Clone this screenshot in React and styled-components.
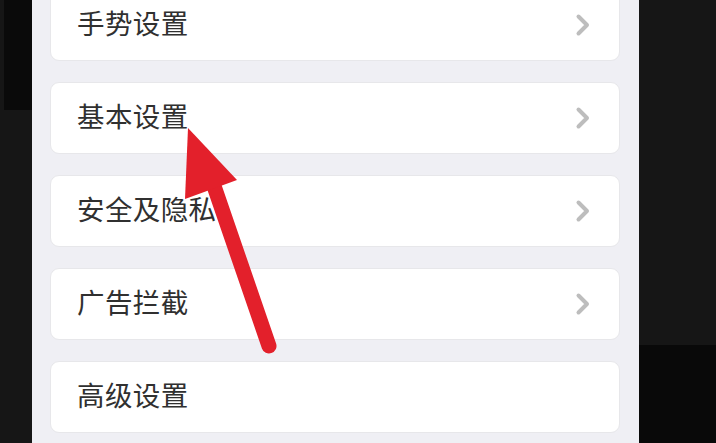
import React from 'react';
import styled, { createGlobalStyle } from 'styled-components';

const GlobalStyle = createGlobalStyle`
  html, body {
    margin: 0;
    padding: 0;
    background: #151515;
    overflow: hidden;
  }
  body {
    font-family: "Noto Sans CJK SC", "Noto Sans", sans-serif;
  }
`;

const Screen = styled.div`
  position: relative;
  width: 716px;
  height: 443px;
  display: flex;
  overflow: hidden;
`;

const SideStrip = styled.div`
  width: ${(p) => p.width}px;
  flex-shrink: 0;
  display: flex;
  flex-direction: column;
  background: #161616;
`;

const DarkBlock = styled.div`
  height: ${(p) => p.height}px;
  margin-left: ${(p) => p.inset || 0}px;
  background: ${(p) => p.color || '#0b0b0b'};
`;

const Filler = styled.div`
  flex: 1;
`;

const Panel = styled.div`
  width: 607px;
  flex-shrink: 0;
  background: #efeff4;
  padding: 0 19px 0 18px;
  box-sizing: border-box;
`;

const List = styled.div`
  margin-top: -11px;
  display: flex;
  flex-direction: column;
  gap: 21px;
`;

const Card = styled.div`
  height: 72px;
  background: #ffffff;
  border: 1px solid #e7e7ea;
  border-radius: 9px;
  box-sizing: border-box;
  display: flex;
  align-items: center;
  justify-content: space-between;
  padding: 0 28px 0 26px;
`;

const Label = styled.span`
  font-size: 27.5px;
  line-height: 1;
  color: #303030;
  letter-spacing: 0.4px;
  margin-bottom: 4px;
`;

const Chevron = styled.svg`
  width: 16px;
  height: 24px;
  display: ${(p) => (p.hidden ? 'none' : 'block')};
`;

const ArrowLayer = styled.svg`
  position: absolute;
  left: 0;
  top: 0;
  width: 716px;
  height: 443px;
  pointer-events: none;
`;

const items = [
  { label: '手势设置' },
  { label: '基本设置' },
  { label: '安全及隐私' },
  { label: '广告拦截' },
  { label: '高级设置', noArrow: true },
];

export default function App() {
  return (
    <>
      <GlobalStyle />
      <Screen>
        <SideStrip width={32}>
          <DarkBlock height={110} inset={4} color="#0a0a0a" />
          <Filler />
        </SideStrip>
        <Panel>
          <List>
            {items.map((item) => (
              <Card key={item.label}>
                <Label>{item.label}</Label>
                <Chevron viewBox="0 0 16 24" hidden={item.noArrow}>
                  <path
                    d="M3.5 3.5 L12 12 L3.5 20.5"
                    fill="none"
                    stroke="#bdbdbd"
                    strokeWidth="4"
                    strokeLinecap="round"
                    strokeLinejoin="round"
                  />
                </Chevron>
              </Card>
            ))}
          </List>
        </Panel>
        <SideStrip width={77}>
          <Filler />
          <DarkBlock height={98} color="#090909" />
        </SideStrip>
        <ArrowLayer viewBox="0 0 716 443">
          <line
            x1="269"
            y1="346"
            x2="214"
            y2="186"
            stroke="#e3202b"
            strokeWidth="15"
            strokeLinecap="round"
          />
          <polygon points="188,128 237,180 185,199" fill="#e3202b" />
        </ArrowLayer>
      </Screen>
    </>
  );
}
